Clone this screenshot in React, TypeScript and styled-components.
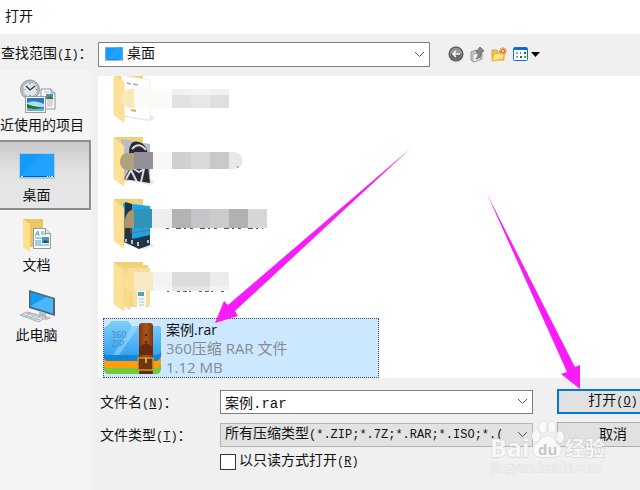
import React from "react";
import styled, { createGlobalStyle } from "styled-components";

const GlobalStyle = createGlobalStyle`
  *, *::before, *::after { box-sizing: border-box; }
  body { margin: 0; background: #f0f0f0; overflow: hidden; }
  button, input, select { font: inherit; color: inherit; margin: 0; }
`;

const uiFont = `"Open Sans", "Noto Sans CJK SC", sans-serif`;
const formFont = `"Liberation Mono", "Noto Sans CJK SC", monospace`;

const Dialog = styled.main`
  position: relative;
  display: flex;
  flex-direction: column;
  min-height: 100vh;
  overflow: hidden;
  background: #f0f0f0;
  color: #111;
  font: 14px/20px ${uiFont};
`;

const TitleBar = styled.header`
  height: 34px;
  padding: 6px 5px;
  background: #fff;
`;

const Title = styled.h1`
  margin: 0;
  font: inherit;
`;

const LookupBar = styled.div`
  display: flex;
  align-items: center;
  height: 36px;
  padding-top: 4px;
`;

const FormLabel = styled.label`
  font-family: ${formFont};
  white-space: nowrap;
`;

const LookupLabel = styled(FormLabel)`
  width: 98px;
  padding-left: 1px;
`;

const Latin = styled.span`
  font-size: 12px;
`;

const Field = styled.div<{ $filled?: boolean }>`
  position: relative;
  display: flex;
  align-items: center;
  height: 24px;
  min-width: 0;
  border: 1px solid ${(p) => (p.$filled ? "#b4b4b4" : "#7f7f7f")};
  background: ${(p) => (p.$filled ? "#e2e2e2" : "#fff")};
  font-family: ${formFont};
`;

const LookupField = styled(Field)`
  flex: 0 1 332px;
  gap: 4px;
  padding-left: 6px;
  height: 25px;
`;

const PlaceSelect = styled.select`
  flex: 1;
  min-width: 0;
  height: 100%;
  padding: 0;
  border: 0;
  outline: 0;
  appearance: none;
  background: transparent;
`;

const CoverSelect = styled.select`
  position: absolute;
  inset: 0;
  width: 100%;
  height: 100%;
  opacity: 0;
`;

const NameInput = styled.input`
  flex: 1;
  min-width: 0;
  height: 100%;
  padding: 0 4px;
  border: 0;
  outline: 0;
  background: transparent;
`;

const Chosen = styled.span`
  flex: 1;
  min-width: 0;
  padding-left: 4px;
  overflow: hidden;
  white-space: nowrap;
`;

const ChevronBox = styled.span`
  display: flex;
  flex: none;
  align-items: center;
  justify-content: center;
  width: 19px;
  pointer-events: none;
`;

const Tools = styled.div`
  display: flex;
  align-items: center;
  gap: 6px;
  padding-left: 18px;
`;

const ToolButton = styled.button`
  display: flex;
  padding: 0;
  border: 0;
  background: none;
`;

const Body = styled.div`
  display: flex;
  flex: 1;
`;

const Places = styled.nav`
  display: flex;
  flex: none;
  flex-direction: column;
  width: 92px;
  background: #f4f4f4;
`;

const PlaceButton = styled.button<{ $active?: boolean }>`
  display: flex;
  flex-direction: column;
  align-items: center;
  width: 91px;
  height: 70px;
  padding: 6px 17px 0 0;
  border: 1px solid transparent;
  border-left: 0;
  background: none;
  ${(p) =>
    p.$active &&
    `
    border: 2px solid #8f8f8f;
    border-left: 0;
    padding: 5px 16px 0 0;
    background: linear-gradient(#c9c9c9, #e3e3e3 45%, #e6e6e6);
  `}
`;

const PlaceIcon = styled.span`
  display: flex;
  align-items: center;
  height: 38px;
`;

const PlaceLabel = styled.span<{ $wide?: boolean }>`
  align-self: ${(p) => (p.$wide ? "flex-start" : "center")};
  white-space: nowrap;
`;

const Content = styled.section`
  display: flex;
  flex: 1;
  flex-direction: column;
  min-width: 0;
  padding: 6px 0 0 6px;
`;

const FileList = styled.ul`
  display: flex;
  flex-direction: column;
  justify-content: flex-end;
  height: 302px;
  margin: 0;
  padding: 0 5px;
  overflow: hidden;
  background: #fff;
  list-style: none;
`;

const FolderRow = styled.li`
  display: flex;
  flex: none;
  height: 63px;
`;

const SelectedRow = styled.li`
  display: flex;
  flex: none;
  width: 276px;
  height: 60px;
  border: 1px dotted #446;
  background: #cce8ff;
`;

const FileText = styled.div`
  display: flex;
  flex-direction: column;
  padding: 1px 0 0 2px;
  color: #858b91;
  font-size: 15px;
  line-height: 19px;
`;

const FileName = styled.strong`
  color: #111;
  font-size: 14px;
  font-weight: 400;
`;

const Form = styled.form`
  display: grid;
  grid-template-columns: 122px minmax(0, 1fr) 83px;
  row-gap: 8px;
  align-items: center;
  padding-top: 11px;
`;

const NameLabel = styled(FormLabel)`
  padding: 4px 0 0 2px;
`;

const FormField = styled(Field)`
  margin-right: 24px;
`;

const ActionButton = styled.button<{ $primary?: boolean }>`
  width: 112px;
  height: 25px;
  padding: 0;
  border: ${(p) => (p.$primary ? "2px solid #0078d7" : "1px solid #adadad")};
  background: #e1e1e1;
  font-family: ${formFont};
`;

const ReadOnly = styled(FormLabel)`
  display: flex;
  grid-column: 2 / 4;
  align-items: center;
  gap: 3px;
  margin-top: -4px;
`;

const Check = styled.input`
  width: 16px;
  height: 16px;
  appearance: none;
  border: 1px solid #333;
  background: #fff;
`;

const Overlay = styled.svg`
  position: absolute;
  top: 0;
  left: 0;
  pointer-events: none;
`;

const Chevron = () => (
  <ChevronBox>
    <svg width="11" height="7" viewBox="0 0 11 7" fill="none" stroke="#555">
      <path d="M1 1l4.500 4.500L10 1" />
    </svg>
  </ChevronBox>
);

const Monitor = ({ width, height }: { width: number; height: number }) => (
  <svg width={width} height={height} viewBox="0 0 36 26" preserveAspectRatio="none">
    <rect width="36" height="26" fill="#a4cdea" />
    <rect x="1" y="1" width="34" height="23" fill="#149bfa" />
    <path d="M1 24L24 1h11v23z" fill="#22a2ff" />
    <path d="M1 23.500h34" stroke="#075da3" />
    <path d="M2 23.500h2M28 23.500h1M30 23.500h1M32 23.500h2" stroke="#fff" />
  </svg>
);

const RecentIcon = () => (
  <svg width="38" height="36" viewBox="17 76 38 36">
    <path d="M40 87h10l4 4v16H40z" fill="#f8f8f8" stroke="#8e9294" />
    <path d="M50 87v4h4" fill="#dce2e5" stroke="#8e9294" />
    <path d="M43 90h5M46 98h6M46 100h6M46 102h6M46 104h5" stroke="#aeb6bd" />
    <rect x="45" y="92" width="7" height="5" fill="#448fc2" />
    <path d="M45 97l4-3 3 2v1z" fill="#377442" />
    <circle cx="29" cy="87.500" r="9.500" fill="#bcc5ca" stroke="#8f999e" />
    <circle cx="29" cy="87.500" r="7.500" fill="#dfe6e9" stroke="#a4adb1" />
    <path d="M29 81v1M29 93v1M22.500 87.500h1M35 87.500h1" stroke="#4d5960" />
    <path d="M25 84l4 4 5-4" fill="none" stroke="#29353c" strokeWidth="1.300" />
    <rect x="24.500" y="94.500" width="20" height="16" fill="#fff" stroke="#989da0" />
    <rect x="26" y="96" width="17" height="13" fill="#2779bd" />
    <path d="M26 101q7-4 17 1v3H26z" fill="#a8dff2" />
    <path d="M26 102l6 2 11 2v3H26z" fill="#316a35" />
    <path d="M26 106l8 1 9-1v3H26z" fill="#63b2d8" />
  </svg>
);

const DocumentsIcon = () => (
  <svg width="28" height="34" viewBox="24 219 28 34">
    <path d="M24 219h20v28H31z" fill="#e9c765" />
    <path d="M24 219l7 5v28l-7-5z" fill="#ffe08a" />
    <path d="M34.500 228.500h12l5 5v15h-17z" fill="#fcfdfd" stroke="#92989c" />
    <path d="M46.500 228.500v5h5" fill="#e3e8ec" stroke="#92989c" />
    <path d="M36 236l3-5 1 5M37 234h3M42 232h3M42 234h5M36 238h14M36 241h6M36 243h6M36 245h14" fill="none" stroke="#4ba1ce" />
    <rect x="43" y="237" width="7" height="6" fill="#4198cf" />
    <path d="M43 243l3-3 4 2v1z" fill="#304b55" />
  </svg>
);

const ComputerIcon = () => (
  <svg width="36" height="34" viewBox="18 288 36 34">
    <path d="M28 289l26 8v18l-26-8z" fill="#526570" />
    <path d="M29.500 291l22.500 7v14.500L29.500 306z" fill="#149cf1" />
    <path d="M29.500 305L45 296l7 2v14.500z" fill="#49b6ff" />
    <path d="M38 310l7 2v3l6 2-6 2-9-3 2-2z" fill="#b7c0c5" />
    <path d="M19 314l7-3 19 5-7 5z" fill="#e4e8ea" stroke="#a5adb1" />
    <path d="M22 314l17 5M25 312l17 5M24 316l6-4M29 317l5-3M34 319l5-4" stroke="#9ba5aa" strokeWidth=".7" />
  </svg>
);

const BackIcon = () => (
  <svg width="16" height="16" viewBox="0 0 16 16">
    <circle cx="8" cy="8" r="7.500" fill="#4a4a4a" />
    <circle cx="8" cy="8" r="6" fill="#666" stroke="#888" />
    <path d="M2 8a6 6 0 0112 0q-6-3-12 0" fill="#999" />
    <path d="M12 8H5M8 5L5 8l3 3" fill="none" stroke="#fff" strokeWidth="1.500" />
  </svg>
);

const UpIcon = () => (
  <svg width="15" height="17" viewBox="0 0 15 17">
    <path d="M1 6l5-2 1 1 5-1v9L4 16l-3-2z" fill="#c7c7c7" stroke="#999" />
    <path d="M3 8l9-1-2 7-7 2z" fill="#eee" stroke="#aaa" />
    <path d="M6 13q3-2 2-7H6l4-5 4 4-3 1q1 6-5 7z" fill="#888" stroke="#555" strokeWidth=".7" />
  </svg>
);

const NewFolderIcon = () => (
  <svg width="16" height="16" viewBox="0 0 16 16">
    <path d="M1 4h5l1 2h6v8H1z" fill="#efc74e" stroke="#d9a72e" />
    <path d="M3 8l11-2-2 7-11 2z" fill="#ffe48a" stroke="#e3b545" />
    <circle cx="12" cy="5" r="2.500" fill="#f36b2c" />
    <path d="M12 1v8M8 5h8M9 2l6 6M15 2L9 8" stroke="#f36b2c" strokeWidth=".9" />
    <circle cx="12" cy="5" r="1.200" fill="#ffd38a" />
  </svg>
);

const ViewIcon = () => (
  <svg width="27" height="15" viewBox="0 0 27 15">
    <rect x=".5" y=".5" width="14" height="13" rx="1" fill="#fff" stroke="#1470cf" />
    <path d="M1 1h13v2H1z" fill="#086bd6" />
    <path d="M3 6h2M3 10h2" stroke="#8ba0c3" strokeWidth="2" />
    <path d="M7 6h1M11 10h2" stroke="#3b9d5c" strokeWidth="2" />
    <path d="M7 10h2M11 6h2" stroke="#2857b6" strokeWidth="2" />
    <path d="M18 5h9l-4.500 5z" fill="#000" />
  </svg>
);

type Cell = [x: number, width: number, color: string];

const mosaic = {
  pale: [[134, 19, "#fbfaf5"], [153, 19, "#fafafa"], [172, 19, "#e1e1e0"], [191, 19, "#e7e7e7"], [210, 19, "#dedfdf"]] as Cell[],
  grey: [[134, 19, "#948f97"], [153, 19, "#f7f7f7"], [172, 19, "#d0d0d0"], [191, 19, "#d9d9d9"], [210, 19, "#c9c9c9"]] as Cell[],
  blue: [[134, 18, "#3093b8"], [152, 20, "#eeecec"], [172, 19, "#b3b3b3"], [191, 19, "#c5c6c9"], [210, 19, "#cbccca"], [229, 19, "#b1b1b1"], [248, 19, "#d6d6d6"]] as Cell[],
  sand: [[134, 19, "#f6e9c4"], [153, 19, "#f3f3f3"], [172, 38, "#dcdcdc"], [210, 19, "#ebedec"]] as Cell[],
};

const Mosaic = ({ cells, y, height }: { cells: Cell[]; y: number; height: number }) => (
  <>
    {cells.map(([x, width, color]) => (
      <rect key={x} x={x} y={y} width={width} height={height} fill={color} />
    ))}
  </>
);

const FolderBack = ({ y }: { y: number }) => <path d={`M114 ${y}h29v44h-19z`} fill="#efcf77" />;
const FolderFront = ({ y }: { y: number }) => (
  <path d={`M114 ${y}l10 9v40l-10-7z`} fill="#ffe196" stroke="#f0cf77" strokeWidth=".5" />
);

const PaperFolder = () => (
  <svg width="180" height="63" viewBox="103 66 180 63">
    <FolderBack y={73} />
    <path d="M150 114l5 4-5 3-22-3z" fill="#e7e7e7" />
    <path d="M121 75l29 5v40l-26-4z" fill="#fffefc" stroke="#e6e6e6" strokeWidth=".6" />
    <path d="M127 83l4 1M133 84l5 1" stroke="#aaa" strokeWidth="1.500" />
    <path d="M131 110l5 1" stroke="#e7a85d" strokeWidth="2" />
    <FolderFront y={73} />
    <path d="M134 89h-4a9 9 0 000 19h4z" fill="#f9e9b9" />
    <Mosaic cells={mosaic.pale} y={89} height={19} />
    <path d="M153 89h76v6h-76z" fill="#fff" opacity=".55" />
  </svg>
);

const PhotoFolder = () => (
  <svg width="180" height="63" viewBox="103 129 180 63">
    <FolderBack y={137} />
    <path d="M150 178l5 4-5 3-24-5z" fill="#e7e7e7" />
    <path d="M121 139l29 5v39l-26-5z" fill="#b8bcc5" />
    <path d="M129 153q0-14 10-11 11 3 9 25l2 16-26-4 6-11z" fill="#292a34" />
    <path d="M132 149q7-8 14 1M134 169l5 3 5-3-3 13M126 179l5-9 6 12" fill="none" stroke="#d9dce3" strokeWidth="2" />
    <FolderFront y={137} />
    <path d="M134 153h-8a9 9 0 000 17h8z" fill="#b0a27e" />
    <Mosaic cells={mosaic.grey} y={152} height={17} />
    <path d="M229 152h5a8 8 0 010 17h-5z" fill="#e8e8e8" />
    <path d="M237 167h2" stroke="#3d8abe" />
  </svg>
);

const TabletFolder = () => (
  <svg width="180" height="63" viewBox="103 192 180 63">
    <FolderBack y={199} />
    <path d="M150 243l5 3-11 3-17-5z" fill="#e7e7e7" />
    <path d="M123 203l27 3v39l-24-4z" fill="#14a8ee" />
    <path d="M125 202l7 2v35l18-4v10l-11 4-15-7z" fill="#203540" />
    <path d="M125 222l6-4v15l19-3" fill="none" stroke="#b84e53" />
    <path d="M126 239v3M132 240v4M138 242v4M148 240v3" stroke="#b8c3c7" strokeWidth="2" />
    <FolderFront y={199} />
    <path d="M134 209q-11 3-9 19h9z" fill="#a8956f" />
    <Mosaic cells={mosaic.blue} y={209} height={19} />
    <path d="M166 228.500h97" stroke="#565656" strokeDasharray="3 7 5 3 2 4" />
  </svg>
);

const NestedFolder = () => (
  <svg width="180" height="63" viewBox="103 255 180 63">
    <FolderBack y={262} />
    <path d="M120 265h28v42h-18z" fill="#f2d27d" />
    <path d="M127 268h23v38h-17z" fill="#f8df99" />
    <path d="M137 290h9v18l-9 2z" fill="#f5f7f7" />
    <path d="M138 292h6v4h-6z" fill="#4e9fc1" />
    <path d="M139 299h5M139 302h5M139 305h5" stroke="#bbc4c7" />
    <path d="M120 265l10 9v36l-10-6z" fill="#f8db8d" />
    <FolderFront y={262} />
    <path d="M134 272h-4a10 10 0 000 19h4z" fill="#fae095" />
    <Mosaic cells={mosaic.sand} y={272} height={19} />
    <path d="M153 286h76v5h-76z" fill="#fff" opacity=".3" />
    <path d="M167 291.500h57" stroke="#606060" strokeDasharray="2 8 3 3 4 2" />
  </svg>
);

const ArchiveIcon = () => (
  <svg width="60" height="58" viewBox="104 319 60 58">
    <defs>
      <linearGradient id="lid" x2="0" y2="1">
        <stop offset="0" stopColor="#7fd0fb" />
        <stop offset="1" stopColor="#35a3ef" />
      </linearGradient>
      <linearGradient id="strap">
        <stop offset="0" stopColor="#7c3510" />
        <stop offset=".5" stopColor="#a9551f" />
        <stop offset="1" stopColor="#7c3510" />
      </linearGradient>
    </defs>
    <path d="M104 360h57v9q0 5-5 5h-47q-5 0-5-5z" fill="#76c83c" />
    <path d="M104 353h57v11q-2 4-5 4h-48q-4 0-4-4z" fill="#ff9e08" />
    <path d="M104 330q0-3 4-4l3-4q1-1 3-1h12q3 0 5 5h26q4 0 4 4v26q-1 5-5 5h-48q-4 0-4-4z" fill="#1583d8" />
    <path d="M104 330q0-3 4-4l3-4q1-1 3-1h12q3 0 5 5h26q4 0 4 4v22q-1 3-5 3h-48q-4 0-4-2z" fill="url(#lid)" />
    <path d="M113 355l19-29h7l-20 29z" fill="#a5e0ff" opacity=".5" />
    <text x="111" y="338" fill="#3f8fc4" fontFamily="Open Sans" fontSize="9">
      360
      <tspan x="111" y="347">ZIP</tspan>
    </text>
    <path d="M139 326q0-3 3-3h8q3 0 3 3v48h-14z" fill="url(#strap)" />
    <path d="M139 347l7-4 7 4v8h-14zM140 370h12v4h-12z" fill="#642b0c" />
    <circle cx="146" cy="335" r="1" fill="#3e1806" />
    <circle cx="146" cy="342" r="1" fill="#3e1806" />
    <rect x="138" y="358" width="15" height="12" fill="#703509" stroke="#c89738" strokeWidth="1.500" />
    <path d="M146 358v5" stroke="#f5cc62" strokeWidth="1.500" />
  </svg>
);

const Arrows = () => (
  <Overlay width="640" height="490" viewBox="0 0 640 490" aria-hidden="true">
    <path d="M411 148L235 311l3 5-23 7 9-22 4 4z" fill="#f81df8" />
    <path d="M487 194l88 173 5-2v24l-19-15 6-2z" fill="#f81df8" />
  </Overlay>
);

const Watermark = () => (
  <Overlay width="640" height="490" viewBox="0 0 640 490">
    <g fill="#fbfbfb" fillOpacity=".85" stroke="#c6c6c6" strokeOpacity=".8" paintOrder="stroke">
      <text x="490" y="457" fontFamily="Open Sans" fontWeight="700" fontSize="25">Bai</text>
      <ellipse cx="536" cy="436" rx="4" ry="6" />
      <ellipse cx="543" cy="427" rx="4" ry="6" />
      <ellipse cx="552" cy="427" rx="4" ry="6" />
      <ellipse cx="560" cy="437" rx="4" ry="6" />
      <path d="M548 436q5 0 8 6 5 3 5 8 0 7-7 7h-14q-7 0-7-7 0-4 5-8 4-6 10-6z" />
      <text x="565" y="456" fontFamily="Noto Sans CJK SC" fontWeight="700" fontSize="20">经验</text>
      <text x="491" y="472" fontFamily="Open Sans" fontSize="13" strokeOpacity=".5">jingyan.baidu.com</text>
    </g>
    <text x="538" y="455" fill="#c8c8c8" fontFamily="Open Sans" fontWeight="700" fontSize="15">du</text>
  </Overlay>
);

export default function App() {
  return (
    <>
      <GlobalStyle />
      <Dialog>
        <TitleBar>
          <Title>打开</Title>
        </TitleBar>
        <LookupBar>
          <LookupLabel htmlFor="place">
            查找范围<Latin>(<u>I</u>)</Latin>：
          </LookupLabel>
          <LookupField>
            <Monitor width={18} height={14} />
            <PlaceSelect id="place">
              <option>桌面</option>
            </PlaceSelect>
            <Chevron />
          </LookupField>
          <Tools>
            <ToolButton aria-label="后退"><BackIcon /></ToolButton>
            <ToolButton aria-label="向上"><UpIcon /></ToolButton>
            <ToolButton aria-label="新建文件夹"><NewFolderIcon /></ToolButton>
            <ToolButton aria-label="视图"><ViewIcon /></ToolButton>
          </Tools>
        </LookupBar>
        <Body>
          <Places>
            <PlaceButton>
              <PlaceIcon><RecentIcon /></PlaceIcon>
              <PlaceLabel $wide>近使用的项目</PlaceLabel>
            </PlaceButton>
            <PlaceButton $active>
              <PlaceIcon><Monitor width={36} height={26} /></PlaceIcon>
              <PlaceLabel>桌面</PlaceLabel>
            </PlaceButton>
            <PlaceButton>
              <PlaceIcon><DocumentsIcon /></PlaceIcon>
              <PlaceLabel>文档</PlaceLabel>
            </PlaceButton>
            <PlaceButton>
              <PlaceIcon><ComputerIcon /></PlaceIcon>
              <PlaceLabel>此电脑</PlaceLabel>
            </PlaceButton>
          </Places>
          <Content>
            <FileList>
              <FolderRow><PaperFolder /></FolderRow>
              <FolderRow><PhotoFolder /></FolderRow>
              <FolderRow><TabletFolder /></FolderRow>
              <FolderRow><NestedFolder /></FolderRow>
              <SelectedRow>
                <ArchiveIcon />
                <FileText>
                  <FileName>案例.rar</FileName>
                  <span>360压缩 RAR 文件</span>
                  <span>1.12 MB</span>
                </FileText>
              </SelectedRow>
            </FileList>
            <Form onSubmit={(e) => e.preventDefault()}>
              <NameLabel htmlFor="name">
                文件名<Latin>(<u>N</u>)</Latin>：
              </NameLabel>
              <FormField>
                <NameInput id="name" defaultValue="案例.rar" />
                <Chevron />
              </FormField>
              <ActionButton $primary type="submit">
                打开<Latin>(<u>O</u>)</Latin>
              </ActionButton>
              <NameLabel htmlFor="kind">
                文件类型<Latin>(<u>T</u>)</Latin>：
              </NameLabel>
              <FormField $filled>
                <Chosen aria-hidden="true">
                  所有压缩类型<Latin>(*.ZIP;*.7Z;*.RAR;*.ISO;*.(</Latin>
                </Chosen>
                <Chevron />
                <CoverSelect id="kind">
                  <option>所有压缩类型</option>
                </CoverSelect>
              </FormField>
              <ActionButton type="button">取消</ActionButton>
              <ReadOnly>
                <Check type="checkbox" />
                <span>以只读方式打开<Latin>(<u>R</u>)</Latin></span>
              </ReadOnly>
            </Form>
          </Content>
        </Body>
        <Arrows />
        <Watermark />
      </Dialog>
    </>
  );
}
